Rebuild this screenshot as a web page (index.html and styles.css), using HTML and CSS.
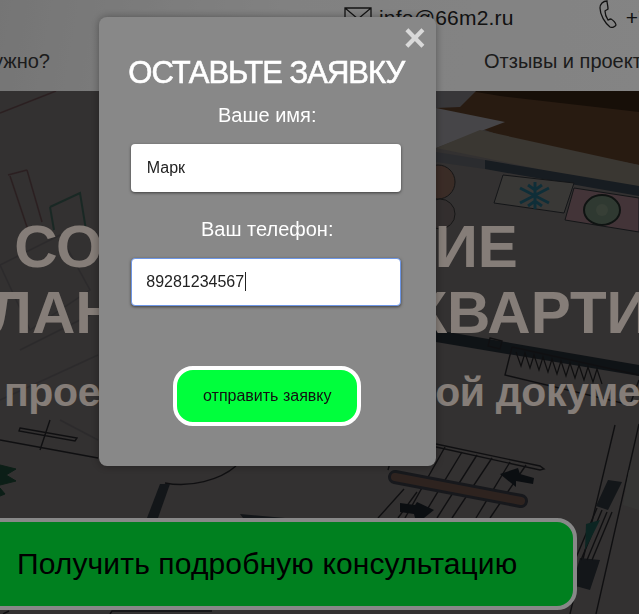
FILE: index.html
```html
<!DOCTYPE HTML>
<html>
<head>
<meta charset="utf-8">
<title>Согласование перепланировки квартиры</title>
<link rel="stylesheet" href="styles.css">
</head>
<body>
<div class="page">
    <header class="site-header">
        <div class="contacts">
            <svg class="icon-mail" viewBox="0 0 28 20"><path d="M1 1h26v18H1zM1 1l13 11L27 1"/></svg>
            <span class="contact-mail">info@66m2.ru</span>
            <svg class="icon-phone" viewBox="0 0 18 28"><path d="M8 1C4 1 1 4 1 8c0 7 5 15 10 19 2 1 5 0 6-2 0-2-3-5-5-6-2 0-2 1-3 1-2-3-3-6-3-9 1-1 2-1 3-2 0-3-1-6-1-8z"/></svg>
            <span class="contact-phone">+7 (343) 000-00-00</span>
        </div>
        <nav class="nav">
            <a class="nav-first">Что вам нужно?</a>
            <a class="nav-item">Отзывы и проекты</a>
        </nav>
    </header>

    <section class="hero">
        <svg class="plan" viewBox="0 91 639 523" preserveAspectRatio="none">
            <!-- desk and paper, top right -->
            <polygon points="436,91 639,91 639,165 520,142 470,125 436,118" fill="#4a3220"/>
            <polygon points="470,91 639,91 639,112 500,96" fill="#2b1c10"/>
            <polygon points="436,108 505,122 436,148" fill="#807f83"/>
            <polygon points="436,91 476,91 460,107 436,108" fill="#666569"/>
            <polygon points="436,148 480,130 639,165 639,190 485,158" fill="#6a645b"/>
            <polygon points="485,160 639,186 639,196 485,169" fill="#2a333c"/>
            <polygon points="436,152 485,160 485,169 436,162" fill="#4f5056"/>
            <!-- fridge panel with snowflake -->
            <polygon points="503,175 574,183 564,213 494,203" fill="#696663" stroke="#25282c"/>
            <g class="snow">
                <path d="M520 188L549 203M549 188L520 203M535 182V209M528 185l7 5 7-5M528 206l7-5 7 5"/>
            </g>
            <polygon points="574,188 639,198 639,232 565,220" fill="#7a5f66" stroke="#25282c"/>
            <ellipse cx="602" cy="210" rx="18" ry="15" fill="#56685a" stroke="#1d2421" stroke-width="2"/>
            <circle cx="602" cy="210" r="6" fill="#657463"/>
            <circle cx="438" cy="182" r="17" fill="#6b5046" stroke="#2a2a2a"/>
            <circle cx="440" cy="214" r="15" fill="#5d5555" stroke="#2a2a2a"/>

            <!-- left side walls -->
            <path class="wall-red" d="M0 113L56 91M8 175L27 170M27 170L42 222M10 176L28 230"/>
            <path class="wall-green" d="M50 207L80 193L86 230M50 207L54 230"/>
            <path class="wall-dark" d="M0 265L60 235L90 290L30 330zM20 350L100 310M0 400L98 355M60 420L98 440"/>
            <path class="wall-thin" d="M0 440L98 458M20 428L77 438L75 441L19 431zM50 420L40 450"/>
            <path class="plant" d="M0 465l16 4-10 6 10 6-16 4M0 488l5 6-5 2"/>

            <!-- door arc and corridor -->
            <path class="wall-thin" d="M165 483C190 488 220 480 236 466"/>
            <polygon points="160,484 170,484 158,518 147,518" fill="#23282e"/>
            <polygon points="240,514 285,518 285,518 243,518" fill="#23282e"/>

            <!-- kitchen counter, radiator -->
            <polygon points="436,330 639,365 639,376 436,342" fill="#1d2329"/>
            <path class="wall-thin" d="M512 347L639 375M512 347L505 375L630 405L639 380"/>
            <path class="zig" d="M516 352l5 14 4-13 5 15 4-13 5 15 4-13 5 15 4-13 5 15 4-13 5 15 4-13 5 15 4-13 5 15 4-13 5 15 4-13 5 15"/>
            <path class="wall-thin" d="M490 338l12 3-2 8-12-3z"/>

            <!-- stairs -->
            <path class="wall-thin" d="M436 444L540 466l4 3-4 1-104-23"/>
            <path class="wall-thin" d="M445 447L405 518M462 452L422 518M477 455L437 518M492 458L452 518M510 462L476 518M526 465L490 518M395 445L388 470"/>
            <path class="wall-thin" d="M404 489L378 518M417 492L398 518"/>
            <path class="bar-outline" d="M395 477L521 501"/>
            <path class="bar" d="M395 477L521 501"/>
            <polygon points="500,474 518,468 520,474 534,478 533,484 516,481 516,487" fill="#151a20"/>
            <polygon points="434,510 417,502 415,505 400,503 400,512 414,514 415,518 424,518" fill="#151a20"/>

            <!-- right strip -->
            <path class="wall-thin" d="M639 424L596 614M615 425L570 614"/>
            <polygon points="608,480 622,482 608,510 596,506" fill="#23282e"/>
            <polygon points="580,558 600,560 590,590 572,585" fill="#23282e"/>
            <path class="wall-thin" d="M597 508L575 560M602 510L581 560M607 512L587 560M612 512L592 560"/>
            <polygon points="586,524 600,520 585,550" fill="#17443f"/>
            <polygon points="629,470 639,470 639,510 623,505" fill="#62625f"/>
            <path class="wall-thin" d="M110 614l2-3 100 0M3 614l6-3"/>
        </svg>
        <div class="hero-text">
            <h1 class="hero-title">СОГЛАСОВАНИЕ<br>ПЕРЕПЛАНИРОВКИ КВАРТИРЫ</h1>
            <p class="hero-sub">проектно-строительной документации</p>
        </div>
        <button class="consult-btn">Получить подробную консультацию</button>
    </section>
</div>

<div class="overlay"></div>

<form class="modal">
    <span class="modal-close">×</span>
    <h2 class="modal-title">ОСТАВЬТЕ ЗАЯВКУ</h2>
    <label class="modal-label">Ваше имя:</label>
    <input class="modal-input" type="text" value="Марк">
    <label class="modal-label modal-label-phone">Ваш телефон:</label>
    <div class="input-wrap">
        <input class="modal-input modal-input-focus" type="text" value="89281234567">
        <span class="caret"></span>
    </div>
    <button class="modal-submit" type="button">отправить заявку</button>
</form>
</body>
</html>
```
FILE: styles.css
```css
html, body {
    margin: 0;
    height: 100%;
    overflow: hidden;
}

body {
    font-family: "Liberation Sans", Arial, sans-serif;
    background: #000;
}

.page {
    width: 639px;
    height: 614px;
    display: flex;
    flex-direction: column;
    overflow: hidden;
}

.site-header {
    height: 91px;
    flex: none;
    background: linear-gradient(100deg, #d6d6d6 0%, #ececec 45%, #f0f0f0 100%);
    color: #333;
    overflow: hidden;
}

.contacts {
    height: 34px;
    display: flex;
    align-items: flex-start;
    white-space: nowrap;
    padding-left: 344px;
}

.icon-mail {
    flex: none;
    width: 28px;
    height: 20px;
    margin-top: 7px;
    fill: none;
    stroke: #222;
    stroke-width: 1.3;
}

.contact-mail {
    margin-left: 7px;
    font-size: 21px;
    line-height: 36px;
    color: #222;
    letter-spacing: 0.2px;
}

.icon-phone {
    flex: none;
    width: 18px;
    height: 28px;
    margin-left: 85px;
    fill: none;
    stroke: #222;
    stroke-width: 1.3;
}

.contact-phone {
    margin-left: 9px;
    font-size: 21px;
    line-height: 36px;
    color: #222;
}

.nav {
    display: flex;
    margin-top: 13px;
    font-size: 20px;
    line-height: 28px;
    color: #333;
    white-space: nowrap;
}

.nav-first {
    width: 50px;
    display: flex;
    justify-content: flex-end;
}

.nav-item {
    margin-left: 434px;
}

.hero {
    flex: 1;
    position: relative;
    background: #5d5959;
    overflow: hidden;
}

.plan {
    position: absolute;
    left: 0;
    top: 0;
    width: 100%;
    height: 100%;
}

.plan path {
    fill: none;
}

.snow path {
    stroke: #1c5566;
    stroke-width: 3;
}

.wall-red {
    stroke: #4f3a3c;
    stroke-width: 1.5;
}

.wall-green {
    stroke: #2f4a42;
    stroke-width: 2;
}

.wall-dark {
    stroke: #504e50;
    stroke-width: 1.5;
}

.wall-thin {
    stroke: #1d1d20;
    stroke-width: 1.4;
}

.zig {
    stroke: #1a1a1c;
    stroke-width: 1.2;
}

.plan .plant {
    fill: #17382a;
    stroke: #17382a;
}

.bar-outline {
    stroke: #2a2d33;
    stroke-width: 14;
    stroke-linecap: round;
}

.bar {
    stroke: #54403a;
    stroke-width: 8;
    stroke-linecap: round;
}

.hero-text {
    position: relative;
    width: 498px;
    margin-left: 17px;
    padding-top: 123px;
    display: flex;
    flex-direction: column;
    align-items: center;
    white-space: nowrap;
    color: #f2e4da;
}

.hero-title {
    margin: 0;
    font-size: 60px;
    line-height: 66px;
    font-weight: bold;
    text-align: center;
    word-spacing: 23px;
}

.hero-sub {
    align-self: flex-start;
    margin: 24px 0 0 -13px;
    font-size: 41px;
    line-height: 44px;
    font-weight: bold;
    letter-spacing: -0.4px;
}

.consult-btn {
    position: absolute;
    left: -30px;
    top: 427px;
    width: 607px;
    height: 92px;
    box-sizing: border-box;
    padding: 0 0 0 43px;
    border: 4px solid #f7f7f7;
    border-radius: 20px;
    background: #00e93a;
    color: #000;
    font-family: inherit;
    font-size: 30px;
    letter-spacing: 0.13px;
    text-align: left;
    white-space: nowrap;
}

.overlay {
    position: fixed;
    left: 0;
    top: 0;
    right: 0;
    bottom: 0;
    background: rgba(0, 0, 0, 0.45);
}

.modal {
    position: fixed;
    left: 98.5px;
    top: 17px;
    width: 337.5px;
    height: 449px;
    box-sizing: border-box;
    padding-top: 38px;
    display: flex;
    flex-direction: column;
    align-items: center;
    background: #888;
    border-radius: 8px;
    box-shadow: 0 0 8px rgba(0, 0, 0, 0.35);
    color: #fff;
}

.modal-close {
    position: absolute;
    right: 10px;
    top: 2px;
    font-size: 38px;
    line-height: 38px;
    font-weight: bold;
    color: #d9d9d9;
}

.modal-title {
    margin: 0 2px 0 0;
    font-size: 31px;
    line-height: 36px;
    font-weight: normal;
    letter-spacing: -1px;
    white-space: nowrap;
    -webkit-text-stroke: 0.6px #fff;
}

.modal-label {
    margin-top: 12px;
    font-size: 20px;
    line-height: 24px;
}

.modal-label-phone {
    margin-top: 25px;
}

.modal-input {
    display: block;
    width: 270px;
    height: 48px;
    margin: 17px 2px 0 0;
    box-sizing: border-box;
    padding: 0 15.5px;
    border: 0;
    border-radius: 4px;
    background: #fff;
    box-shadow: 0 1px 3px rgba(0, 0, 0, 0.55);
    color: #222;
    font-family: inherit;
    font-size: 16px;
    outline: none;
    caret-color: transparent;
}

.modal-input-focus {
    margin: 0;
    border: 1.5px solid #6d96e6;
    padding: 0 14px;
}

.input-wrap {
    position: relative;
    margin: 17px 2px 0 0;
}

.caret {
    position: absolute;
    left: 114px;
    top: 14px;
    width: 1px;
    height: 19px;
    background: #222;
}

.modal-submit {
    width: 188px;
    height: 60px;
    margin-top: 60px;
    border: 4px solid #fff;
    border-radius: 20px;
    background: #00ff3c;
    color: #111;
    font-family: inherit;
    font-size: 16px;
}
```
